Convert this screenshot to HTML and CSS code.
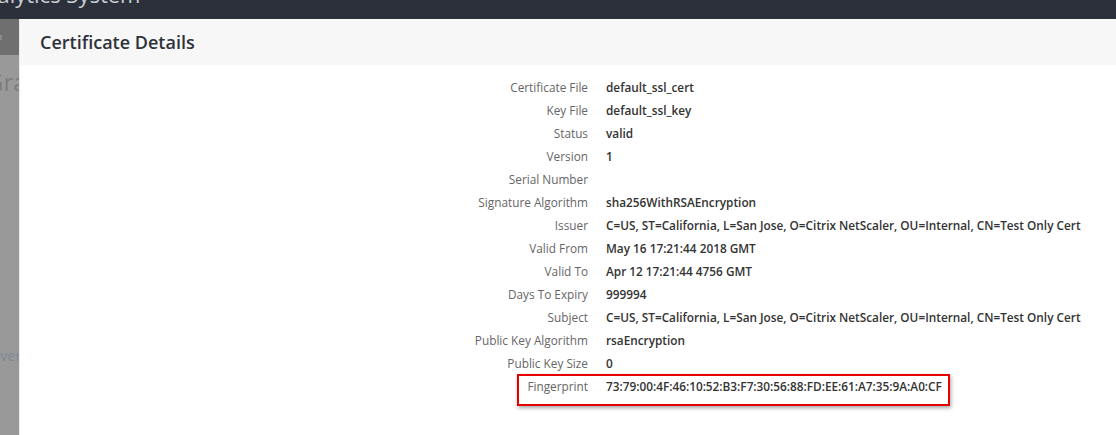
FILE: index.html
```html
<!DOCTYPE html>
<html>
<head>
<meta charset="utf-8">
<link rel="stylesheet" href="styles.css">
</head>
<body>
<header class="topbar"><span class="app-title">Analytics System</span></header>
<div class="main">
  <aside class="backdrop">
    <div class="backdrop-head"><span class="menu-mark"></span></div>
    <div class="backdrop-body">
      <span class="ghost-title">Gra</span>
      <span class="ghost-link">Govern</span>
    </div>
  </aside>
  <section class="modal">
    <div class="modal-head"><h1>Certificate Details</h1></div>
    <div class="details">
      <div class="label">Certificate File</div><div class="value">default_ssl_cert</div>
      <div class="label">Key File</div><div class="value">default_ssl_key</div>
      <div class="label">Status</div><div class="value">valid</div>
      <div class="label">Version</div><div class="value">1</div>
      <div class="label">Serial Number</div><div class="value"></div>
      <div class="label">Signature Algorithm</div><div class="value">sha256WithRSAEncryption</div>
      <div class="label">Issuer</div><div class="value">C=US, ST=California, L=San Jose, O=Citrix NetScaler, OU=Internal, CN=Test Only Cert</div>
      <div class="label">Valid From</div><div class="value">May 16 17:21:44 2018 GMT</div>
      <div class="label">Valid To</div><div class="value">Apr 12 17:21:44 4756 GMT</div>
      <div class="label">Days To Expiry</div><div class="value">999994</div>
      <div class="label">Subject</div><div class="value">C=US, ST=California, L=San Jose, O=Citrix NetScaler, OU=Internal, CN=Test Only Cert</div>
      <div class="label">Public Key Algorithm</div><div class="value">rsaEncryption</div>
      <div class="label">Public Key Size</div><div class="value">0</div>
      <div class="label">Fingerprint</div><div class="value">73:79:00:4F:46:10:52:B3:F7:30:56:88:FD:EE:61:A7:35:9A:A0:CF</div>
      <div class="highlight"></div>
    </div>
  </section>
</div>
</body>
</html>
```
FILE: styles.css
```css
html, body {
  margin: 0;
  padding: 0;
  height: 100%;
  overflow: hidden;
  background: #ffffff;
  font-family: "Open Sans", "Noto Sans", sans-serif;
}
.topbar {
  height: 19px;
  background: #2b303b;
  overflow: hidden;
}
.app-title {
  display: block;
  color: #c9ccd2;
  font-size: 22px;
  line-height: 24px;
  margin-top: -18px;
  margin-left: -30px;
  white-space: nowrap;
}
.main {
  display: flex;
  height: calc(100% - 19px);
}
.backdrop {
  width: 19px;
  flex: none;
  display: flex;
  flex-direction: column;
  overflow: hidden;
  box-shadow: inset -3px 0 3px -1px rgba(0,0,0,0.18);
}
.backdrop-head {
  height: 36px;
  background: #6f6f6f;
  position: relative;
}
.menu-mark {
  position: absolute;
  left: 0;
  top: 16px;
  width: 2px;
  height: 5px;
  background: #8a8a8a;
}
.backdrop-body {
  flex: 1;
  background: #999999;
  display: flex;
  flex-direction: column;
  white-space: nowrap;
}
.ghost-title {
  display: block;
  margin-left: -14px;
  margin-top: 12px;
  font-size: 24px;
  color: #7d7d7d;
  line-height: 30px;
}
.ghost-link {
  display: block;
  margin-left: -18px;
  margin-top: 249px;
  font-size: 14px;
  color: #7c8996;
}
.modal {
  flex: 1;
  border-left: 1px solid #e9e9e9;
  background: #ffffff;
  min-width: 0;
}
.modal-head {
  height: 46px;
  background: #f7f7f7;
  display: flex;
  align-items: center;
  padding-left: 20px;
}
.modal-head h1 {
  margin: 0;
  font-size: 18px;
  font-weight: 600;
  color: #2e323b;
}
.details {
  position: relative;
  display: grid;
  grid-template-columns: 568px 1fr;
  column-gap: 18px;
  grid-auto-rows: 23px;
  padding-top: 11px;
  font-size: 11.8px;
  line-height: 23px;
}
.label {
  text-align: right;
  color: #666666;
  white-space: nowrap;
}
.value {
  color: #333333;
  font-weight: 600;
  white-space: nowrap;
}
.highlight {
  position: absolute;
  left: 497px;
  top: 309px;
  width: 429px;
  height: 28px;
  border: 2px solid #e60000;
  box-shadow: 1px 2px 4px rgba(0,0,0,0.35);
  pointer-events: none;
}
```
